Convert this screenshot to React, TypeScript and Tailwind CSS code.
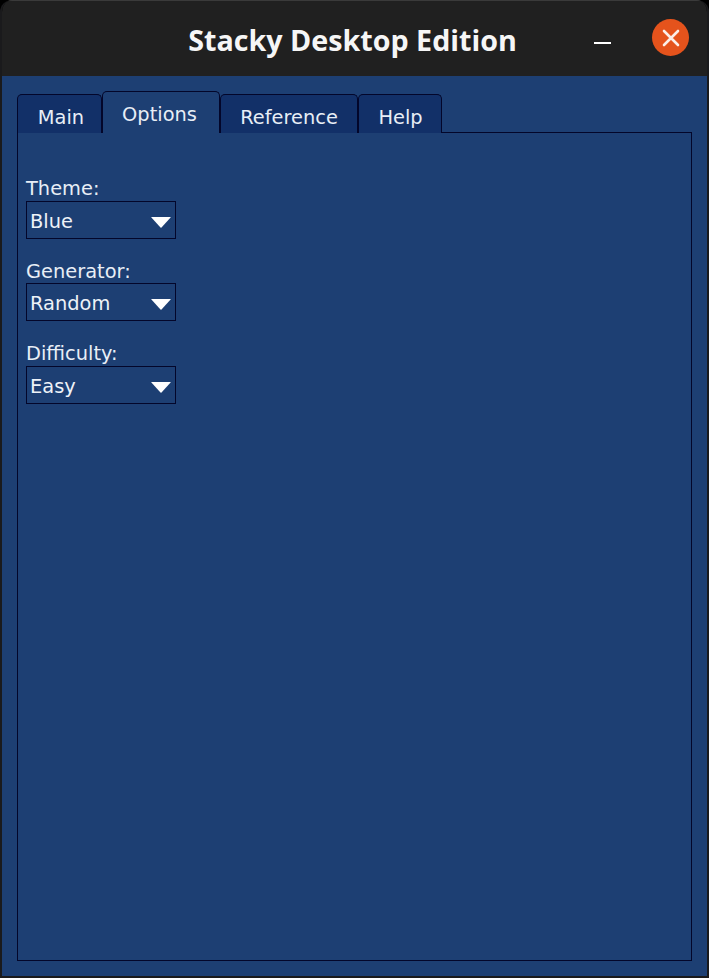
const TABS = [
  { label: 'Main', width: 'w-[85px]', pad: 'pl-[3px]', active: false },
  { label: 'Options', width: 'w-[118px]', pad: 'pr-[3px]', active: true },
  { label: 'Reference', width: 'w-[138px]', pad: '', active: false },
  { label: 'Help', width: 'w-[84px]', pad: 'pl-[1px]', active: false },
]

const FIELDS = [
  { label: 'Theme:', value: 'Blue', gap: 'mt-[43px]', labelHeight: 'h-[25px]' },
  { label: 'Generator:', value: 'Random', gap: 'mt-[20px]', labelHeight: 'h-[24px]' },
  { label: 'Difficulty:', value: 'Easy', gap: 'mt-[20px]', labelHeight: 'h-[25px]' },
]

function Field({ label, value, gap, labelHeight }: { label: string; value: string; gap: string; labelHeight: string }) {
  return (
    <div className={gap}>
      <div className={`${labelHeight} text-[19.4px] leading-[25px] text-[#e8eef6]`}>{label}</div>
      <div className="flex h-[38px] w-[150px] items-center justify-between border border-[#03062a] pl-[3px] pr-[4px]">
        <span className="mt-[3px] text-[19.4px] leading-[25px] text-[#eef2f8]">{value}</span>
        <svg width="20" height="11" viewBox="0 0 20 11" className="mt-[5px]">
          <path d="M0.5 0H19.5Q20 0 19.6 0.5L10.5 10.6Q10 11 9.5 10.6L0.4 0.5Q0 0 0.5 0Z" fill="#ffffff" />
        </svg>
      </div>
    </div>
  )
}

export default function App() {
  return (
    <div className="flex h-[978px] w-[709px] flex-col overflow-hidden bg-black font-['DejaVu_Sans',sans-serif]">
      <div className="flex h-full flex-col overflow-hidden rounded-t-[12px] border-x-2 border-b-2 border-[#1a1a1c]">
        {/* title bar */}
        <header className="relative flex h-[76px] shrink-0 items-center justify-center border-t border-[#3a3a3a] bg-[#202020] pr-[4px] pt-[2px]">
          <h1 className="text-[28.7px] font-bold text-[#f6f6f6] font-['Open_Sans',sans-serif]">
            Stacky Desktop Edition
          </h1>
          <span className="absolute left-[592px] top-[41px] h-[2px] w-[17px] bg-white" />
          <div className="absolute left-[650px] top-[18px] flex h-[37px] w-[37px] items-center justify-center rounded-full bg-[#e5531c]">
            <svg width="18" height="18" viewBox="0 0 18 18" fill="none" stroke="#fbeee8" strokeWidth="2.6" strokeLinecap="round">
              <path d="M2 2L16 16M16 2L2 16" />
            </svg>
          </div>
        </header>

        <main className="flex min-h-0 flex-1 flex-col bg-[#1d3f73] px-[15px] pb-[15px]">
          {/* tabs */}
          <div className="flex h-[56px] shrink-0 items-end">
            {TABS.map((t) =>
              t.active ? (
                <div
                  key={t.label}
                  className={`${t.width} ${t.pad} relative z-10 -mb-px flex h-[42px] shrink-0 justify-center rounded-t-[5px] border-x border-t border-[#03062a] bg-[#1d3f73] pt-[10px] text-[19.4px] leading-[25px] text-[#e8eef6]`}
                >
                  {t.label}
                </div>
              ) : (
                <div
                  key={t.label}
                  className={`${t.width} ${t.pad} relative z-10 -mb-px flex h-[39px] shrink-0 justify-center rounded-t-[5px] border-x border-t border-[#03062a] bg-[#123068] pt-[10px] text-[19.4px] leading-[25px] text-[#e8eef6]`}
                >
                  {t.label}
                </div>
              ),
            )}
          </div>

          {/* panel */}
          <section className="min-h-0 flex-1 border border-[#03062a] bg-[#1d3f73] pl-[8px]">
            {FIELDS.map((f) => (
              <Field key={f.label} {...f} />
            ))}
          </section>
        </main>
      </div>
    </div>
  )
}
